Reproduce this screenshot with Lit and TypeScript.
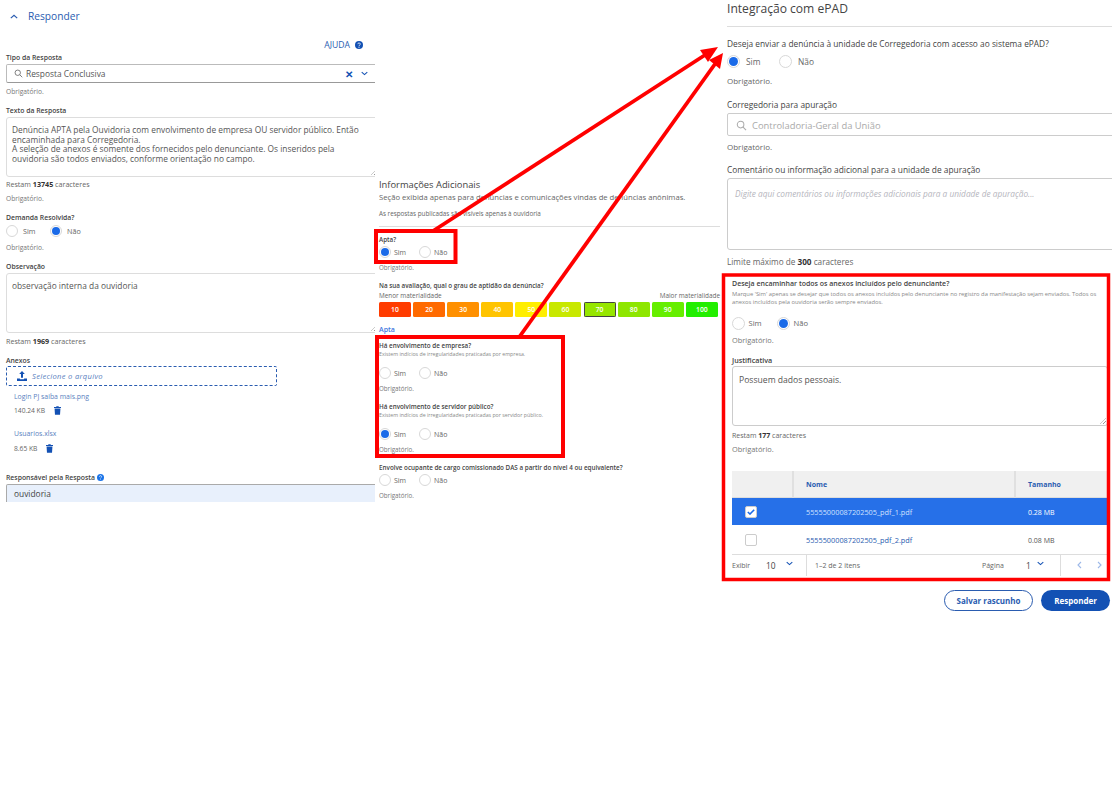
import { LitElement, html, css, unsafeCSS, svg } from "lit";
import { customElement } from "lit/decorators.js";

const spacers = unsafeCSS(
  Array.from({ length: 41 }, (_, i) => `.mt${i}{margin-top:${i}px}`).join("")
);

const searchIcon = (cls: string) => html`<svg class=${cls} viewBox="0 0 12 12" fill="none" stroke="currentColor" stroke-width="1.1"><circle cx="5" cy="5" r="3.6"/><path d="M7.7 7.7 11 11"/></svg>`;
const chevron = (cls: string) => html`<svg class=${cls} viewBox="0 0 10 6" fill="none" stroke="currentColor" stroke-width="1.5"><path d="M1 1l4 3.6L9 1"/></svg>`;
const help = (cls: string) => html`<svg class=${cls} viewBox="0 0 12 12"><circle cx="6" cy="6" r="6" fill="currentColor"/><path d="M4.3 4.7a1.8 1.8 0 1 1 2.6 1.6c-.6.3-.9.6-.9 1.2" fill="none" stroke="#fff" stroke-width="1.2"/><circle cx="6" cy="9.2" r=".8" fill="#fff"/></svg>`;
const trash = html`<svg class="trash" viewBox="0 0 10 12" fill="currentColor"><path d="M3.5 0h3l.5 1h3v1.3H0V1h3zM.8 3h8.4l-.6 9H1.4z"/></svg>`;

type Radio = "sim" | "nao" | "";

@customElement("app-root")
export class AppRoot extends LitElement {
  static styles = css`
    ${spacers}
    :host {
      display: block;
      position: relative;
      width: 1112px;
      height: 788px;
      overflow: hidden;
      background: #fff;
      font-family: "Open Sans", "Liberation Sans", sans-serif;
      color: #555;
    }
    * { box-sizing: border-box; }
    .page { display: flex; align-items: flex-start; }
    .left { width: 375px; height: 502px; overflow: hidden; padding-left: 6px; flex: none; }
    .mid { width: 341px; margin-left: 4px; padding-top: 178px; flex: none; }
    .right { width: 385px; margin-left: 7px; flex: none; }
    .sub { padding-left: 5px; }

    .t { font-size: 7.15px; line-height: 11px; height: 10px; white-space: nowrap; color: #666; }
    .t.label { font-size: 6.85px; font-weight: 600; color: #444; }
    .t.obr { font-size: 6.7px; color: #777; }
    .hint { font-size: 5.25px; line-height: 8px; height: 8px; color: #888; white-space: nowrap; }
    b { color: #333; font-weight: 700; }

    .head { display: flex; align-items: center; height: 16px; margin-top: 8px; color: #2a5cb0; font-size: 10.2px; font-weight: 500; }
    .head svg { width: 8px; height: 5px; margin: 0 10px 0 4px; transform: rotate(180deg); }
    .ajuda { display: flex; justify-content: flex-end; align-items: center; gap: 5px; height: 12px; padding-right: 12px; color: #2a5cb0; font-size: 8.6px; font-weight: 500; }
    .ajuda svg { width: 8px; height: 8px; color: #1351b4; }

    .input { display: flex; align-items: center; border: 1px solid #bbb; border-radius: 2px; background: #fff; }
    .input-a { height: 19px; margin-right: -4px; padding: 0 10px 0 7px; font-size: 8.4px; border-bottom-color: #999; }
    .input-a .s { width: 9px; height: 9px; color: #666; margin-right: 3px; flex: none; }
    .input-a .x { margin-left: auto; color: #1351b4; font-size: 10px; font-weight: 700; line-height: 1; margin-right: 8px; }
    .input-a .c { width: 7px; height: 5px; color: #1351b4; flex: none; }
    .ta { border: 1px solid #ddd; border-radius: 3px; position: relative; font-size: 8.35px; color: #555; }
    .ta::after { content: ""; position: absolute; right: 1px; bottom: 1px; width: 6px; height: 6px;
      background: repeating-linear-gradient(135deg, transparent 0 1.5px, #999 1.5px 2.2px); clip-path: polygon(100% 0, 100% 100%, 0 100%); }
    .ta-l { height: 60px; margin-right: -4px; padding: 7px 5px; line-height: 9.6px; }
    .ta-l p { margin: 0; white-space: nowrap; }
    .upload { display: flex; align-items: center; gap: 5px; width: 271px; height: 20px; padding-left: 10px; border: 1px dashed #2a5cb0; border-radius: 2px; font-size: 7.6px; letter-spacing: .3px; font-style: italic; color: #5a7fc0; }
    .upload svg { width: 10px; height: 10px; color: #1351b4; }
    .t.file { padding-left: 8px; font-size: 6.9px; color: #5a7fc0; }
    .size { display: flex; align-items: center; gap: 9px; height: 12px; padding-left: 8px; font-size: 6.7px; color: #666; }
    .trash { width: 7px; height: 9px; color: #1351b4; }
    .inline-help { display: flex; align-items: center; gap: 2px; }
    .inline-help svg { width: 7px; height: 7px; color: #1a73e8; }
    .input-b { height: 18px; margin-right: -4px; padding-left: 7px; background: #e8f0fc; border-color: #aaa; border-radius: 2px 0 0 0; border-bottom: 0; font-size: 8.4px; font-weight: 500; color: #444; }

    .radios { display: flex; align-items: center; height: 14px; font-size: 7.2px; color: #666; }
    .radio { display: flex; align-items: center; }
    .dot { width: 12px; height: 12px; border: 1px solid #d8d8d8; border-radius: 50%; background: #fff; flex: none; display: flex; align-items: center; justify-content: center; }
    .dot.on::after { content: ""; width: 8px; height: 8px; border-radius: 50%; background: #1a6ae8; }
    .radios.l .radio { width: 44px; gap: 5px; }
    .radios.m .radio { width: 40px; gap: 3px; font-size: 7px; }
    .radios.r .radio { width: 52px; gap: 6px; font-size: 8.4px; }
    .radios.r .dot { width: 13px; height: 13px; }
    .radios.r .dot.on::after { width: 9px; height: 9px; }
    .radios.s .radio { width: 45px; gap: 3.5px; font-size: 7.6px; }
    .radios.s .dot { width: 13px; height: 13px; }
    .radios.s .dot.on::after { width: 9px; height: 9px; }

    .title-m { font-size: 9.35px; line-height: 14px; height: 14px; color: #444; font-weight: 500; white-space: nowrap; }
    .desc { font-size: 7.67px; line-height: 10px; height: 10px; color: #666; white-space: nowrap; }
    .small { font-size: 6.3px; line-height: 10px; height: 10px; color: #666; white-space: nowrap; }
    hr { border: 0; height: 1px; background: #ddd; margin-bottom: 0; margin-left: 0; margin-right: 0; }
    .t.label-m { font-size: 6.3px; font-weight: 600; color: #444; }
    .mid .t.obr { font-size: 6.2px; }
    .scale-l { display: flex; justify-content: space-between; font-size: 6.4px; line-height: 10px; height: 10px; color: #666; width: 341px; }
    .bars { display: grid; grid-template-columns: repeat(10, 32px); column-gap: 2.1px; height: 15px; }
    .bar { border-radius: 1.5px; color: #fff; font-size: 6.8px; font-weight: 600; display: flex; align-items: center; justify-content: center; height: 15px; }
    .bar.sel { outline: 1.2px solid #444; outline-offset: -1px; }
    .t.apta { color: #3f78e0; font-weight: 600; font-size: 7px; }

    .title-r { font-size: 12.1px; line-height: 16px; height: 16px; margin-top: 1px; color: #444; font-weight: 500; white-space: nowrap; }
    .lab-r { font-size: 8.36px; line-height: 12px; height: 12px; color: #444; font-weight: 500; white-space: nowrap; }
    .obr-r { font-size: 8px; line-height: 10px; height: 10px; color: #666; white-space: nowrap; }
    .limit { font-size: 8.2px; line-height: 11px; }
    .input-r { height: 23px; padding: 1px 0 0 8px; margin-right: -6px; font-size: 9.4px; color: #aaa; border-color: #ccc; }
    .input-r svg { width: 11px; height: 11px; margin-right: 5px; color: #aaa; }
    .ta-r { height: 72px; margin-right: -6px; padding: 9px 7px; font-size: 8.3px; font-style: italic; color: #b5b5bd; border-color: #ccc; white-space: nowrap; }
    .ta-r::after { display: none; }
    .ta-j { width: 376px; height: 60px; padding: 7px 6px; font-size: 8.6px; color: #555; border-color: #ccc; }
    .lab-s { font-size: 7px; line-height: 10px; height: 10px; font-weight: 600; color: #444; white-space: nowrap; }
    .lab-s.j { font-size: 7.2px; }
    .sub .t { font-size: 7px; }
    .sub .t.obr { font-size: 7.4px; }
    .hint-r { font-size: 5.8px; line-height: 8px; height: 8px; color: #888; white-space: nowrap; }

    table { border-collapse: collapse; width: 376px; table-layout: fixed; font-size: 7.3px; }
    .c1 { width: 61px; } .c2 { width: 222px; }
    th { height: 26px; background: #f0f0f0; color: #2a5cb0; font-size: 7px; text-align: left; font-weight: 700; padding: 2px 0 0 12px; border-left: 2px solid #e0e0e0; border-bottom: 1px solid #ddd; }
    th:first-child { border-left: 0; }
    td { padding: 2px 0 0 13px; color: #2a5cb0; }
    tr.r1 td { height: 28px; background: #2670e8; color: #cfe0ff; }
    tr.r1 td.sz { color: #fff; font-weight: 500; font-size: 7px; }
    tr.r2 td { height: 29px; border-bottom: 1px solid #ddd; }
    tr.r2 td.sz { color: #555; font-size: 7px; }
    .check { display: flex; align-items: center; justify-content: center; width: 12px; height: 12px; border-radius: 2px; background: #fff; border: 1px solid #ccc; }
    .check svg { width: 8px; height: 6px; }
    .pager { display: flex; align-items: stretch; width: 376px; height: 21px; font-size: 7px; color: #666; }
    .pager > div { display: flex; align-items: center; white-space: nowrap; padding-top: 1px; }
    .p1 { width: 75px; border-right: 1px solid #ddd; }
    .p1 span:first-child { width: 34px; }
    .num { font-size: 8.4px; color: #444; width: 20px; }
    .pager svg.c { width: 7px; height: 5px; color: #1351b4; margin-top: -4px; }
    .p2 { width: 254px; padding-left: 8px; border-right: 1px solid #ddd; }
    .p2 .pg { margin-left: auto; width: 44px; }
    .p2 .num { width: 11px; }
    .p2 svg.c { margin-right: 16px; }
    .p3 { flex: 1; gap: 15px; padding-left: 16px; color: #9db8e8; font-size: 9px; }
    .p3 svg { width: 5px; height: 8px; margin-top: -2px; }
    .actions { display: flex; justify-content: flex-end; gap: 8px; padding-right: 2px; }
    .btn { height: 21px; border-radius: 11px; display: flex; align-items: center; justify-content: center; font-size: 8px; font-weight: 700; }
    .ghost { width: 89px; border: 1px solid #2a5cb0; color: #2a5cb0; background: #fff; }
    .solid { width: 69px; background: #1351b4; color: #fff; }

    .overlay { position: absolute; inset: 0; width: 1112px; height: 788px; pointer-events: none; }
  `;

  private radios(kind: string, v: Radio) {
    return html`<div class="radios ${kind}">
      <div class="radio"><span class="dot ${v === "sim" ? "on" : ""}"></span>Sim</div>
      <div class="radio"><span class="dot ${v === "nao" ? "on" : ""}"></span>Não</div>
    </div>`;
  }

  private left() {
    return html`<section class="left">
      <div class="head">${chevron("")}Responder</div>
      <div class="ajuda mt15">AJUDA ${help("")}</div>
      <div class="t label mt1">Tipo da Resposta</div>
      <div class="input input-a mt2">${searchIcon("s")}Resposta Conclusiva<span class="x">✕</span>${chevron("c")}</div>
      <div class="t obr mt3">Obrigatório.</div>
      <div class="t label mt9">Texto da Resposta</div>
      <div class="ta ta-l mt2">
        <p>Denúncia APTA pela Ouvidoria com envolvimento de empresa OU servidor público. Então</p>
        <p>encaminhada para Corregedoria.</p>
        <p>A seleção de anexos é somente dos fornecidos pelo denunciante. Os inseridos pela</p>
        <p>ouvidoria são todos enviados, conforme orientação no campo.</p>
      </div>
      <div class="t mt2">Restam <b>13745</b> caracteres</div>
      <div class="t obr mt4">Obrigatório.</div>
      <div class="t label mt9">Demanda Resolvida?</div>
      <div class="mt2">${this.radios("l", "nao")}</div>
      <div class="t obr mt4">Obrigatório.</div>
      <div class="t label mt9">Observação</div>
      <div class="ta ta-l mt2"><p>observação interna da ouvidoria</p></div>
      <div class="t mt3">Restam <b>1969</b> caracteres</div>
      <div class="t label mt9">Anexos</div>
      <div class="upload mt1">
        <svg viewBox="0 0 12 12" fill="currentColor"><path d="M6 0l3.4 3.6H7.2V8H4.8V3.6H2.6zM0 9h3.5v1h5V9H12v3H0z"/></svg>
        Selecione o arquivo
      </div>
      <div class="t file mt5">Login PJ saiba mais.png</div>
      <div class="size mt3">140.24 KB ${trash}</div>
      <div class="t file mt12">Usuarios.xlsx</div>
      <div class="size mt4">8.65 KB ${trash}</div>
      <div class="t label mt18 inline-help">Responsável pela Resposta ${help("")}</div>
      <div class="input input-b mt2">ouvidoria</div>
    </section>`;
  }

  private mid() {
    const colors = ["#ff3c00","#ff6a00","#ff9000","#ffc400","#ffee00","#c8e800","#96e600","#8ee600","#66ee00","#22ee00"];
    return html`<section class="mid">
      <div class="title-m">Informações Adicionais</div>
      <div class="desc">Seção exibida apenas para denúncias e comunicações vindas de denúncias anônimas.</div>
      <div class="small mt7">As respostas publicadas são visíveis apenas à ouvidoria</div>
      <hr class="mt7" />
      <div class="t label-m mt7">Apta?</div>
      <div class="mt1">${this.radios("m", "sim")}</div>
      <div class="t obr mt3">Obrigatório.</div>
      <div class="t label-m mt8">Na sua avaliação, qual o grau de aptidão da denúncia?</div>
      <div class="scale-l mt1"><span>Menor materialidade</span><span>Maior materialidade</span></div>
      <div class="bars mt1">
        ${colors.map((c, i) => html`<div class="bar ${i === 6 ? "sel" : ""}" style="background:${c}">${(i + 1) * 10}</div>`)}
      </div>
      <div class="t apta mt7">Apta</div>
      <div class="t label-m mt6">Há envolvimento de empresa?</div>
      <div class="hint">Existem indícios de irregularidades praticadas por empresa.</div>
      <div class="mt8">${this.radios("m", "")}</div>
      <div class="t obr mt3">Obrigatório.</div>
      <div class="t label-m mt8">Há envolvimento de servidor público?</div>
      <div class="hint">Existem indícios de irregularidades praticadas por servidor público.</div>
      <div class="mt8">${this.radios("m", "sim")}</div>
      <div class="t obr mt3">Obrigatório.</div>
      <div class="t label-m mt8">Envolve ocupante de cargo comissionado DAS a partir do nível 4 ou equivalente?</div>
      <div class="mt1">${this.radios("m", "")}</div>
      <div class="t obr mt3">Obrigatório.</div>
    </section>`;
  }

  private right() {
    return html`<section class="right">
      <div class="title-r">Integração com ePAD</div>
      <hr class="mt9" />
      <div class="lab-r mt11">Deseja enviar a denúncia à unidade de Corregedoria com acesso ao sistema ePAD?</div>
      <div class="mt4">${this.radios("r", "sim")}</div>
      <div class="obr-r mt8">Obrigatório.</div>
      <div class="lab-r mt13">Corregedoria para apuração</div>
      <div class="input input-r mt2">${searchIcon("")}Controladoria-Geral da União</div>
      <div class="obr-r mt6">Obrigatório.</div>
      <div class="lab-r mt12">Comentário ou informação adicional para a unidade de apuração</div>
      <div class="ta ta-r mt2">Digite aqui comentários ou informações adicionais para a unidade de apuração...</div>
      <div class="obr-r limit mt6">Limite máximo de <b>300</b> caracteres</div>
      <div class="sub">
        <div class="lab-s mt13">Deseja encaminhar todos os anexos incluídos pelo denunciante?</div>
        <div class="hint-r mt1">Marque 'Sim' apenas se desejar que todos os anexos incluídos pelo denunciante no registro da manifestação sejam enviados. Todos os</div>
        <div class="hint-r">anexos incluídos pela ouvidoria serão sempre enviados.</div>
        <div class="mt10">${this.radios("s", "nao")}</div>
        <div class="t obr mt5">Obrigatório.</div>
        <div class="lab-s j mt10">Justificativa</div>
        <div class="ta ta-j mt1">Possuem dados pessoais.</div>
        <div class="t mt4">Restam <b>177</b> caracteres</div>
        <div class="t obr mt4">Obrigatório.</div>
        <table class="mt17">
          <thead><tr><th class="c1"></th><th class="c2">Nome</th><th>Tamanho</th></tr></thead>
          <tbody>
            <tr class="r1">
              <td><span class="check"><svg viewBox="0 0 8 6" fill="none" stroke="#1a6ae8" stroke-width="1.6"><path d="M.8 3l2.2 2L7.2.8"/></svg></span></td>
              <td>55555000087202505_pdf_1.pdf</td><td class="sz">0.28 MB</td>
            </tr>
            <tr class="r2">
              <td><span class="check"></span></td>
              <td>55555000087202505_pdf_2.pdf</td><td class="sz">0.08 MB</td>
            </tr>
          </tbody>
        </table>
        <div class="pager">
          <div class="p1"><span>Exibir</span><span class="num">10</span>${chevron("c")}</div>
          <div class="p2"><span>1–2 de 2 itens</span><span class="pg">Página</span><span class="num">1</span>${chevron("c")}</div>
          <div class="p3">
            <svg viewBox="0 0 5 8" fill="none" stroke="currentColor" stroke-width="1.1"><path d="M4 1 1 4l3 3"/></svg>
            <svg viewBox="0 0 5 8" fill="none" stroke="currentColor" stroke-width="1.1"><path d="M1 1l3 3-3 3"/></svg>
          </div>
        </div>
      </div>
      <div class="actions mt14">
        <div class="btn ghost">Salvar rascunho</div>
        <div class="btn solid">Responder</div>
      </div>
    </section>`;
  }

  render() {
    return html`<div class="page">${this.left()}${this.mid()}${this.right()}</div>
      <svg class="overlay" viewBox="0 0 1112 788">
        ${svg`
        <g fill="none" stroke="#f00">
          <rect x="376" y="231" width="79.5" height="31" stroke-width="4"/>
          <rect x="377" y="337" width="186" height="119" stroke-width="4"/>
          <rect x="723.5" y="275" width="385" height="304.5" stroke-width="3.5"/>
          <path d="M433 231 705 55" stroke-width="3.8"/>
          <path d="M520 336 715 64" stroke-width="3.8"/>
        </g>
        <g fill="#f00">
          <polygon points="718,47 700,50 708,62"/>
          <polygon points="723,53 709,60 720,69"/>
        </g>`}
      </svg>`;
  }
}
